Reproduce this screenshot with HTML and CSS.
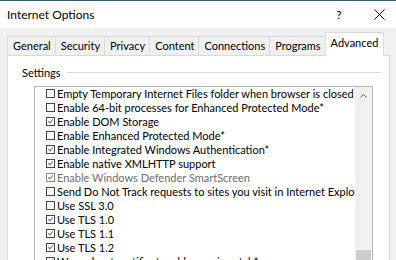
FILE: index.html
```html
<!DOCTYPE html>
<html lang="en">
<head>
    <meta charset="UTF-8">
    <title>Internet Options</title>
    <link rel="stylesheet" href="styles.css">
</head>
<body>
    <div class="window">
        <div class="titlebar">
            <span class="title">Internet Options</span>
            <span class="help">?</span>
            <span class="close">
                <svg width="11" height="11" viewBox="0 0 11 11"><path d="M0.5 0.5 L10.5 10.5 M10.5 0.5 L0.5 10.5" stroke="#000" stroke-width="1" fill="none"/></svg>
            </span>
        </div>

        <div class="window-body">
            <div class="tabs">
                <div class="tab">General</div>
                <div class="tab">Security</div>
                <div class="tab">Privacy</div>
                <div class="tab">Content</div>
                <div class="tab">Connections</div>
                <div class="tab">Programs</div>
                <div class="tab active">Advanced</div>
            </div>

            <div class="panel">
                <div class="group-label">
                    <span>Settings</span>
                    <div class="group-line"></div>
                </div>

                <div class="listbox">
                    <ul class="options">
                        <li><span class="box"></span>Empty Temporary Internet Files folder when browser is closed</li>
                        <li><span class="box"></span>Enable 64-bit processes for Enhanced Protected Mode*</li>
                        <li><span class="box checked"></span>Enable DOM Storage</li>
                        <li><span class="box"></span>Enable Enhanced Protected Mode*</li>
                        <li><span class="box checked"></span>Enable Integrated Windows Authentication*</li>
                        <li><span class="box checked"></span>Enable native XMLHTTP support</li>
                        <li class="disabled"><span class="box checked"></span>Enable Windows Defender SmartScreen</li>
                        <li><span class="box"></span>Send Do Not Track requests to sites you visit in Internet Explorer</li>
                        <li><span class="box"></span>Use SSL 3.0</li>
                        <li><span class="box checked"></span>Use TLS 1.0</li>
                        <li><span class="box checked"></span>Use TLS 1.1</li>
                        <li><span class="box checked"></span>Use TLS 1.2</li>
                        <li><span class="box checked"></span>Warn about certificate address mismatch*</li>
                    </ul>
                    <div class="scrollbar">
                        <div class="arrow">
                            <svg width="7" height="4" viewBox="0 0 7 4"><path d="M0.5 3.5 L3.5 0.5 L6.5 3.5" stroke="#606060" fill="none"/></svg>
                        </div>
                        <div class="track"></div>
                        <div class="thumb"></div>
                    </div>
                </div>
            </div>
        </div>
    </div>
</body>
</html>
```

FILE: styles.css
```css
body {
    margin: 0;
    padding: 0;
    font-family: Lato, "Liberation Sans", sans-serif;
    font-size: 11px;
    color: #000000;
    background-color: #f0f0f0;
    overflow: hidden;
}

.window {
    width: 396px;
    height: 260px;
    overflow: hidden;
    border-top: 1px solid #2f5a72;
    box-sizing: border-box;
}

/* Title bar */
.titlebar {
    display: flex;
    align-items: center;
    height: 27px;
    background-color: #ffffff;
    padding-left: 7px;
}

.title {
    flex: 1;
    font-size: 12px;
}

.help {
    width: 46px;
    text-align: center;
    font-size: 12px;
}

.close {
    display: flex;
    justify-content: center;
    width: 34px;
}

/* Tabs */
.window-body {
    padding: 4px 6px 0 7px;
}

.tabs {
    display: flex;
    align-items: flex-end;
    height: 23px;
    position: relative;
    z-index: 1;
}

.tab {
    height: 19px;
    line-height: 18px;
    padding: 0 4px 0 5px;
    border: 1px solid #d9d9d9;
    border-bottom: none;
    margin-right: -1px;
    background-color: #f0f0f0;
    box-sizing: border-box;
}

.tab.active {
    height: 24px;
    line-height: 20px;
    background-color: #ffffff;
    margin-bottom: -1px;
    padding: 0 5px;
}

/* Panel */
.panel {
    background-color: #ffffff;
    border: 1px solid #d9d9d9;
    height: 220px;
    padding: 9px 8px 0 14px;
}

.group-label {
    display: flex;
    align-items: center;
    gap: 6px;
    height: 14px;
}

.group-line {
    flex: 1;
    height: 1px;
    background-color: #dcdcdc;
}

.listbox {
    display: flex;
    margin: 7px 8px 0 12px;
    height: 190px;
    border: 1px solid #bababa;
    border-bottom: none;
}

.options {
    flex: 1;
    list-style: none;
    margin: -1px 0 0 0;
    padding: 0 0 0 11px;
    overflow: hidden;
    white-space: nowrap;
}

.options li {
    display: flex;
    align-items: center;
    height: 14px;
}

.options li.disabled {
    color: #6d6d6d;
}

.box {
    width: 9px;
    height: 9px;
    border: 1px solid #444444;
    box-sizing: border-box;
    margin-right: 2px;
    flex-shrink: 0;
    position: relative;
}

.box.checked::after {
    content: "";
    position: absolute;
    left: 2px;
    top: 0px;
    width: 2px;
    height: 4px;
    border-right: 1px solid #777777;
    border-bottom: 1px solid #777777;
    transform: rotate(40deg);
}

.options li.disabled .box {
    border-color: #8a8a8a;
}

/* Scrollbar */
.scrollbar {
    width: 17px;
    display: flex;
    flex-direction: column;
    background-color: #f0f0f0;
}

.arrow {
    height: 17px;
    display: flex;
    align-items: center;
    justify-content: center;
}

.track {
    flex: 1;
}

.thumb {
    height: 27px;
    margin: 0 1px;
    background-color: #cdcdcd;
}
```
